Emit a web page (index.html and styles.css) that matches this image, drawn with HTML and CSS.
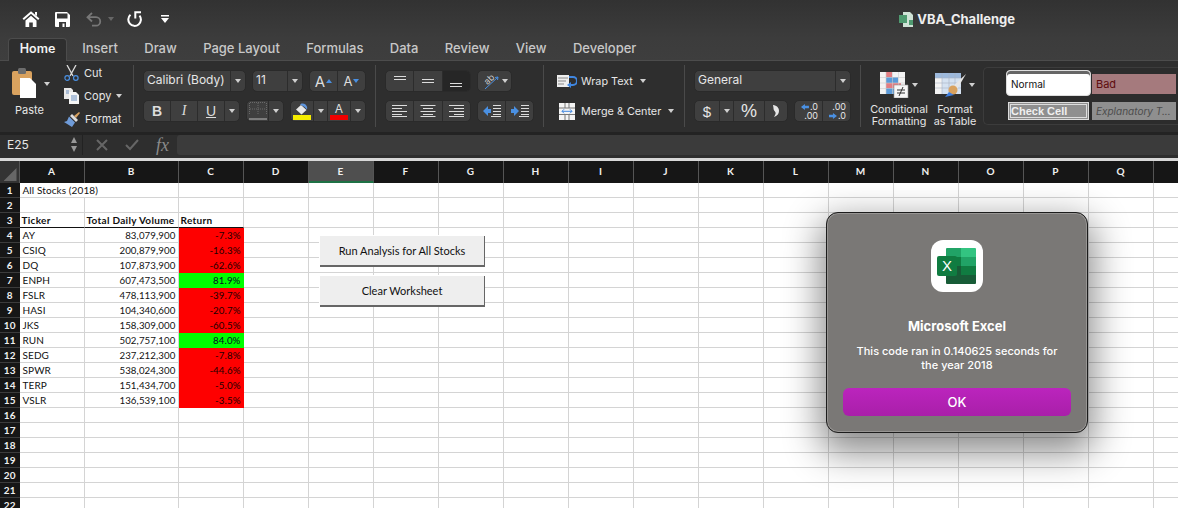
FILE: index.html
```html
<!DOCTYPE html>
<html lang="en">
<head>
    <meta charset="UTF-8">
    <title>VBA_Challenge</title>
    <link rel="stylesheet" href="styles.css">
</head>
<body>
    <div class="titlebar">
        <div class="quick">
            <svg class="qa-home" width="18" height="16" viewBox="0 0 18 16"><path d="M1.200 8.200 9 1.500l7.800 6.700" fill="none" stroke="#fff" stroke-width="2"/><path d="M13 1h2v4l-2-1.500zM3.500 9.500 9 4.800l5.500 4.700V16h-3.700v-4.500H7.200V16H3.500z" fill="#fff"/></svg>
            <svg class="qa-save" width="15" height="15" viewBox="0 0 15 15"><path d="M1 0h11l3 3v11a1 1 0 0 1-1 1H1a1 1 0 0 1-1-1V1a1 1 0 0 1 1-1z" fill="#fff"/><path d="M2 1.500h10.500v5H2zM4 10h7v5H4z" fill="#383838"/><path d="M7.500 11.500h2V15h-2z" fill="#fff"/></svg>
            <svg class="qa-undo" width="16" height="15" viewBox="0 0 16 15"><path d="M6 1 1.500 5.200 6 9.500M2 5.200h8a4.200 4.200 0 0 1 0 8.500H6" fill="none" stroke="#777" stroke-width="1.800"/></svg>
            <span class="caret qa-caret"></span>
            <svg class="qa-redo" width="16" height="16" viewBox="0 0 16 16"><path d="M4.500 3.800a6.300 6.300 0 1 0 9 .8" fill="none" stroke="#fff" stroke-width="2"/><path d="M15 1.200H9.300v6.300" fill="none" stroke="#fff" stroke-width="2"/></svg>
            <svg class="qa-more" width="8" height="8" viewBox="0 0 8 8"><path d="M0 0h8v1.500H0zM0 3h8L4 8z" fill="#fff"/></svg>
        </div>
        <div class="doc-title">
            <svg width="15" height="15" viewBox="0 0 15 15"><path d="M4 0h7l3 3v12H4z" fill="#cfe3d6"/><path d="M0 3h8v8H0z" fill="#4f9a70"/><path d="M10 8h4v5h-4z" fill="#4f9a70"/></svg>
            <span>VBA_Challenge</span>
        </div>
    </div>

    <div class="tabs">
        <div class="tab active">Home</div>
        <div class="tab">Insert</div>
        <div class="tab">Draw</div>
        <div class="tab">Page Layout</div>
        <div class="tab">Formulas</div>
        <div class="tab">Data</div>
        <div class="tab">Review</div>
        <div class="tab">View</div>
        <div class="tab">Developer</div>
    </div>

    <div class="ribbon">
        <div class="group clipboard">
            <div class="paste">
                <svg width="24" height="30" viewBox="0 0 24 30"><rect x="0" y="3" width="20" height="24" rx="2" fill="#d9a25f"/><rect x="6" y="0" width="8" height="6" rx="1.500" fill="#6d6d6d"/><path d="M8 10h10l6 6v14H8z" fill="#fff"/></svg>
                <span class="caret paste-caret"></span>
                <span class="paste-label">Paste</span>
            </div>
            <div class="clip-items">
                <div class="clip-item">
                    <svg width="15" height="16" viewBox="0 0 15 16"><path d="M3 0l6 11M12 0 6 11" stroke="#ddd" stroke-width="1.300" fill="none"/><circle cx="3.200" cy="13" r="2.300" fill="none" stroke="#4a90e2" stroke-width="1.200"/><circle cx="11.800" cy="13" r="2.300" fill="none" stroke="#4a90e2" stroke-width="1.200"/></svg>
                    <span>Cut</span>
                </div>
                <div class="clip-item">
                    <svg width="15" height="16" viewBox="0 0 15 16"><path d="M0 0h7l2 2v9H0z" fill="#e8e8e8"/><path d="M5 4h7l3 3v9H5z" fill="#f5f5f5"/><path d="M7 8h6M7 10h6M7 12h6M2 3h3M2 5h3" stroke="#6b8fc0"/></svg>
                    <span>Copy</span><span class="caret copy-caret"></span>
                </div>
                <div class="clip-item">
                    <svg width="16" height="15" viewBox="0 0 16 15"><path d="M10 4l5-4 1 1-4 5z" fill="#d9a25f"/><path d="M8 2l6 6-2 2-6-6z" fill="#ddd"/><path d="M5 4.500l6 6-3 4.500-8-5 3-1z" fill="#6f9bd8"/></svg>
                    <span>Format</span>
                </div>
            </div>
        </div>
        <div class="vsep"></div>

        <div class="group font-group">
            <div class="row">
                <div class="seg w-font"><span class="cell grow text-val">Calibri (Body)</span><span class="cell drop"><i class="caret"></i></span></div>
                <div class="seg w-size"><span class="cell grow text-val">11</span><span class="cell drop"><i class="caret"></i></span></div>
                <div class="seg w-grow">
                    <span class="cell grow letter big">A<i class="tri up"></i></span>
                    <span class="cell grow letter small">A<i class="tri down"></i></span>
                </div>
            </div>
            <div class="row">
                <div class="seg w-biu">
                    <span class="cell grow fmt bold">B</span>
                    <span class="cell grow fmt ital">I</span>
                    <span class="cell grow fmt under">U</span>
                    <span class="cell drop"><i class="caret"></i></span>
                </div>
                <div class="seg w-border">
                    <span class="cell grow"><svg width="18" height="18" viewBox="0 0 18 18"><path d="M.5 1v12M9 1v12M17.500 1v12M1 .5h16M1 7h16" stroke="#6a6a6a" stroke-dasharray="1 1" fill="none"/><path d="M0 17h18" stroke="#bbb"/></svg></span>
                    <span class="cell drop"><i class="caret"></i></span>
                </div>
                <div class="seg w-fill">
                    <span class="cell grow color">
                        <svg width="14" height="12" viewBox="0 0 14 12"><path d="M1 6.500 6 2l5.500 5-5 4.500z" fill="#e8e8e8"/><path d="M5 1.500C6 0 9 0 10.500 1.500c1.500 1.500 2 3 1.500 5L9.500 4z" fill="#5f95dd"/></svg>
                        <b class="swatch yellow"></b>
                    </span>
                    <span class="cell drop"><i class="caret"></i></span>
                    <span class="cell grow color">
                        <em class="font-a">A</em>
                        <b class="swatch red"></b>
                    </span>
                    <span class="cell drop"><i class="caret"></i></span>
                </div>
            </div>
        </div>
        <div class="vsep"></div>

        <div class="group align-group">
            <div class="row">
                <div class="seg w-align">
                    <span class="cell grow"><svg width="14" height="14" viewBox="0 0 14 14"><path d="M1 2.500h12M1 5.500h12" stroke="#ddd"/></svg></span>
                    <span class="cell grow"><svg width="14" height="14" viewBox="0 0 14 14"><path d="M1 5.500h12M1 8.500h12" stroke="#ddd"/></svg></span>
                    <span class="cell grow on"><svg width="14" height="14" viewBox="0 0 14 14"><path d="M1 9.500h12M1 12.500h12" stroke="#ddd"/></svg></span>
                </div>
                <div class="seg w-orient">
                    <span class="cell grow"><svg class="orient" width="18" height="18" viewBox="0 0 18 18"><text x="3" y="11" class="orient-text" transform="rotate(-45 7 9)">ab</text><path d="M3 17 16 5M16 5l-3 .5M16 5l-.5 3" stroke="#4a90e2" fill="none"/></svg><i class="caret"></i></span>
                </div>
            </div>
            <div class="row">
                <div class="seg w-align">
                    <span class="cell grow"><svg width="16" height="12" viewBox="0 0 16 12"><path d="M0 .5h15M0 3.500h10M0 6.500h15M0 9.500h10M0 11.500h15" stroke="#ddd"/></svg></span>
                    <span class="cell grow"><svg width="16" height="12" viewBox="0 0 16 12"><path d="M.5 .5h15M3 3.500h10M.5 6.500h15M3 9.500h10M.5 11.500h15" stroke="#ddd"/></svg></span>
                    <span class="cell grow"><svg width="16" height="12" viewBox="0 0 16 12"><path d="M1 .5h15M6 3.500h10M1 6.500h15M6 9.500h10M1 11.500h15" stroke="#ddd"/></svg></span>
                </div>
                <div class="seg w-indent">
                    <span class="cell grow"><svg width="18" height="12" viewBox="0 0 18 12"><path d="M0 6l5-5v3h3v4H5v3z" fill="#4a90e2"/><path d="M10 .5h8M10 3.500h8M10 6.500h8M10 9.500h8M8 11.500h10" stroke="#ddd"/></svg></span>
                    <span class="cell grow"><svg width="18" height="12" viewBox="0 0 18 12"><path d="M8 6 3 1v3H0v4h3v3z" fill="#4a90e2"/><path d="M10 .5h8M10 3.500h8M10 6.500h8M10 9.500h8M8 11.500h10" stroke="#ddd"/></svg></span>
                </div>
            </div>
        </div>
        <div class="vsep"></div>

        <div class="group wrap-group">
            <div class="wrap-item">
                <svg width="20" height="14" viewBox="0 0 20 14"><path d="M0 1h12v12H0z" fill="#eee"/><path d="M1 4h10M1 7h8M1 10h6" stroke="#888"/><path d="M12 3h4a3 3 0 0 1 0 8h-3" fill="none" stroke="#3f86e0" stroke-width="2"/><path d="M14 8l-4 3 4 3z" fill="#3f86e0"/></svg>
                <span>Wrap Text</span><span class="caret"></span>
            </div>
            <div class="wrap-item">
                <svg width="20" height="17" viewBox="0 0 20 17"><path d="M2 0h16v17H2z" fill="#f4f4f4"/><path d="M2 5h16M2 11.500h16M8 0v5M12 0v5M8 11.500V17M12 11.500V17" stroke="#777"/><path d="M5 8.300h10M5 8.300l2-2M5 8.300l2 2M15 8.300l-2-2M15 8.300l-2 2" stroke="#3f86e0" fill="none"/></svg>
                <span>Merge &amp; Center</span><span class="caret"></span>
            </div>
        </div>
        <div class="vsep"></div>

        <div class="group number-group">
            <div class="row">
                <div class="seg w-general"><span class="cell grow text-val">General</span><span class="cell drop"><i class="caret"></i></span></div>
            </div>
            <div class="row">
                <div class="seg w-money">
                    <span class="cell dollar">$</span>
                    <span class="cell drop"><i class="caret"></i></span>
                    <span class="cell percent">%</span>
                    <span class="cell comma"><svg width="6" height="12" viewBox="0 0 6 12"><path d="M0 0c4 .5 6 3 6 6 0 3-2 5-5 6 1-2 2-3 1.500-4.500C2 6 .5 5.500.5 3.500.5 2 0 1 0 0z" fill="#e6e6e6"/></svg></span>
                </div>
                <div class="seg w-decimal">
                    <span class="cell grow dec">
                        <span><i class="arrow left"></i>.0</span>
                        <span>.00</span>
                    </span>
                    <span class="cell grow dec">
                        <span>.00</span>
                        <span><i class="arrow right"></i>.0</span>
                    </span>
                </div>
            </div>
        </div>
        <div class="vsep"></div>

        <div class="group table-group">
            <div class="big-btn">
                <div class="big-icon">
                    <svg width="30" height="26" viewBox="0 0 30 26"><path d="M0 0h25v22H0z" fill="#f3f3f3"/><path d="M6 0h6v5H6z" fill="#e27d82"/><path d="M6 5h12v6H6z" fill="#5b9ad8"/><path d="M6 11h15v5H6z" fill="#e27d82"/><path d="M6 16h8v6H6z" fill="#5b9ad8"/><path d="M0 5.500h25M0 11h25M0 16.500h25M6 0v22M12.500 0v22M18.500 0v22" stroke="#ccc" stroke-width=".6"/><path d="M14 13h14v13H14z" fill="#f6f6f6" stroke="#999" stroke-width=".6"/><path d="M17 18h8M17 21h8M23 15l-4 9" stroke="#333" fill="none"/></svg>
                    <span class="caret"></span>
                </div>
                <span class="big-label">Conditional<br>Formatting</span>
            </div>
            <div class="big-btn">
                <div class="big-icon">
                    <svg width="32" height="26" viewBox="0 0 32 26"><path d="M0 1h26v21H0z" fill="#f3f3f3"/><path d="M0 1h26v5H0z" fill="#9db9dc"/><path d="M7 6h19v16H7z" fill="#d5e2f1"/><path d="M0 6h26M0 11h26M0 16h26M7 1v21M14 1v21M20 1v21" stroke="#a8b4c2" stroke-width=".6"/><path d="M31 2 17 15l4 4z" fill="#e6e6e6"/><circle cx="18" cy="18" r="4.500" fill="#d9a25f"/><path d="M14 20l5 3-9 2z" fill="#3f7fe0"/></svg>
                    <span class="caret"></span>
                </div>
                <span class="big-label">Format<br>as Table</span>
            </div>
        </div>

        <div class="styles-panel">
            <div class="style normal">Normal</div>
            <div class="style bad">Bad</div>
            <div class="style check">Check Cell</div>
            <div class="style explain">Explanatory T...</div>
        </div>
    </div>

    <div class="formula-bar">
        <div class="name-box">
            <span>E25</span>
            <span class="stepper"><i class="step up"></i><i class="step down"></i></span>
        </div>
        <div class="formula-btns">
            <svg width="12" height="12" viewBox="0 0 12 12"><path d="M1 1l10 10M11 1 1 11" stroke="#666" stroke-width="2"/></svg>
            <svg width="14" height="12" viewBox="0 0 14 12"><path d="M1 6l4 4 8-9" stroke="#666" stroke-width="2" fill="none"/></svg>
            <span class="fx">fx</span>
        </div>
        <div class="formula-input"></div>
    </div>

    <div class="sheet">
        <table class="grid">
            <colgroup>
                <col class="c-head"><col class="c-a"><col class="c-b">
                <col class="c-n"><col class="c-n"><col class="c-n"><col class="c-n"><col class="c-n"><col class="c-n"><col class="c-n"><col class="c-n"><col class="c-n"><col class="c-n"><col class="c-n"><col class="c-n"><col class="c-n"><col class="c-n"><col class="c-n"><col class="c-r">
            </colgroup>
            <thead>
                <tr><th class="corner"><i></i></th><th>A</th><th>B</th><th>C</th><th>D</th><th class="sel">E</th><th>F</th><th>G</th><th>H</th><th>I</th><th>J</th><th>K</th><th>L</th><th>M</th><th>N</th><th>O</th><th>P</th><th>Q</th><th></th></tr>
            </thead>
            <tbody>
                <tr><th>1</th><td colspan="2">All Stocks (2018)</td><td></td><td></td><td></td><td></td><td></td><td></td><td></td><td></td><td></td><td></td><td></td><td></td><td></td><td></td><td></td><td></td></tr>
                <tr><th>2</th><td></td><td></td><td></td><td></td><td></td><td></td><td></td><td></td><td></td><td></td><td></td><td></td><td></td><td></td><td></td><td></td><td></td><td></td></tr>
                <tr class="heads"><th>3</th><td class="hd">Ticker</td><td class="hd">Total Daily Volume</td><td class="hd">Return</td><td></td><td></td><td></td><td></td><td></td><td></td><td></td><td></td><td></td><td></td><td></td><td></td><td></td><td></td><td></td></tr>
                <tr><th>4</th><td>AY</td><td class="num">83,079,900</td><td class="num neg">-7.3%</td><td></td><td></td><td></td><td></td><td></td><td></td><td></td><td></td><td></td><td></td><td></td><td></td><td></td><td></td><td></td></tr>
                <tr><th>5</th><td>CSIQ</td><td class="num">200,879,900</td><td class="num neg">-16.3%</td><td></td><td></td><td></td><td></td><td></td><td></td><td></td><td></td><td></td><td></td><td></td><td></td><td></td><td></td><td></td></tr>
                <tr><th>6</th><td>DQ</td><td class="num">107,873,900</td><td class="num neg">-62.6%</td><td></td><td></td><td></td><td></td><td></td><td></td><td></td><td></td><td></td><td></td><td></td><td></td><td></td><td></td><td></td></tr>
                <tr><th>7</th><td>ENPH</td><td class="num">607,473,500</td><td class="num pos">81.9%</td><td></td><td></td><td></td><td></td><td></td><td></td><td></td><td></td><td></td><td></td><td></td><td></td><td></td><td></td><td></td></tr>
                <tr><th>8</th><td>FSLR</td><td class="num">478,113,900</td><td class="num neg">-39.7%</td><td></td><td></td><td></td><td></td><td></td><td></td><td></td><td></td><td></td><td></td><td></td><td></td><td></td><td></td><td></td></tr>
                <tr><th>9</th><td>HASI</td><td class="num">104,340,600</td><td class="num neg">-20.7%</td><td></td><td></td><td></td><td></td><td></td><td></td><td></td><td></td><td></td><td></td><td></td><td></td><td></td><td></td><td></td></tr>
                <tr><th>10</th><td>JKS</td><td class="num">158,309,000</td><td class="num neg">-60.5%</td><td></td><td></td><td></td><td></td><td></td><td></td><td></td><td></td><td></td><td></td><td></td><td></td><td></td><td></td><td></td></tr>
                <tr><th>11</th><td>RUN</td><td class="num">502,757,100</td><td class="num pos">84.0%</td><td></td><td></td><td></td><td></td><td></td><td></td><td></td><td></td><td></td><td></td><td></td><td></td><td></td><td></td><td></td></tr>
                <tr><th>12</th><td>SEDG</td><td class="num">237,212,300</td><td class="num neg">-7.8%</td><td></td><td></td><td></td><td></td><td></td><td></td><td></td><td></td><td></td><td></td><td></td><td></td><td></td><td></td><td></td></tr>
                <tr><th>13</th><td>SPWR</td><td class="num">538,024,300</td><td class="num neg">-44.6%</td><td></td><td></td><td></td><td></td><td></td><td></td><td></td><td></td><td></td><td></td><td></td><td></td><td></td><td></td><td></td></tr>
                <tr><th>14</th><td>TERP</td><td class="num">151,434,700</td><td class="num neg">-5.0%</td><td></td><td></td><td></td><td></td><td></td><td></td><td></td><td></td><td></td><td></td><td></td><td></td><td></td><td></td><td></td></tr>
                <tr><th>15</th><td>VSLR</td><td class="num">136,539,100</td><td class="num neg">-3.5%</td><td></td><td></td><td></td><td></td><td></td><td></td><td></td><td></td><td></td><td></td><td></td><td></td><td></td><td></td><td></td></tr>
                <tr><th>16</th><td></td><td></td><td></td><td></td><td></td><td></td><td></td><td></td><td></td><td></td><td></td><td></td><td></td><td></td><td></td><td></td><td></td><td></td></tr>
                <tr><th>17</th><td></td><td></td><td></td><td></td><td></td><td></td><td></td><td></td><td></td><td></td><td></td><td></td><td></td><td></td><td></td><td></td><td></td><td></td></tr>
                <tr><th>18</th><td></td><td></td><td></td><td></td><td></td><td></td><td></td><td></td><td></td><td></td><td></td><td></td><td></td><td></td><td></td><td></td><td></td><td></td></tr>
                <tr><th>19</th><td></td><td></td><td></td><td></td><td></td><td></td><td></td><td></td><td></td><td></td><td></td><td></td><td></td><td></td><td></td><td></td><td></td><td></td></tr>
                <tr><th>20</th><td></td><td></td><td></td><td></td><td></td><td></td><td></td><td></td><td></td><td></td><td></td><td></td><td></td><td></td><td></td><td></td><td></td><td></td></tr>
                <tr><th>21</th><td></td><td></td><td></td><td></td><td></td><td></td><td></td><td></td><td></td><td></td><td></td><td></td><td></td><td></td><td></td><td></td><td></td><td></td></tr>
                <tr><th>22</th><td></td><td></td><td></td><td></td><td></td><td></td><td></td><td></td><td></td><td></td><td></td><td></td><td></td><td></td><td></td><td></td><td></td><td></td></tr>
            </tbody>
        </table>

        <button class="macro-btn run">Run Analysis for All Stocks</button>
        <button class="macro-btn clear">Clear Worksheet</button>

        <div class="dialog">
            <div class="app-icon">
                <svg width="40" height="36" viewBox="0 0 40 36">
                    <path d="M9 1a1 1 0 0 1 1-1h14v9H9z" fill="#21a366"/>
                    <path d="M24 0h14a1 1 0 0 1 1 1v8H24z" fill="#33c481"/>
                    <path d="M9 9h15v9H9z" fill="#107c41"/>
                    <path d="M24 9h15v9H24z" fill="#21a366"/>
                    <path d="M9 18h15v9H9z" fill="#185c37"/>
                    <path d="M24 18h15v9H24z" fill="#107c41"/>
                    <path d="M9 27h30v8a1 1 0 0 1-1 1H10a1 1 0 0 1-1-1z" fill="#185c37"/>
                    <rect x="0" y="8" width="20" height="20" rx="2" fill="#107c41"/>
                    <text x="10" y="23" class="icon-x">X</text>
                </svg>
            </div>
            <div class="dlg-title">Microsoft Excel</div>
            <div class="dlg-msg">This code ran in 0.140625 seconds for<br>the year 2018</div>
            <button class="dlg-ok">OK</button>
        </div>
    </div>
</body>
</html>
```

FILE: styles.css
```css
* {
    box-sizing: border-box;
}

body {
    margin: 0;
    height: 508px;
    overflow: hidden;
    background: #fff;
    font-family: Inter, "Noto Sans", sans-serif;
    font-size: 11px;
    color: #e6e6e6;
}

.caret {
    display: inline-block;
    width: 0;
    height: 0;
    border-left: 3px solid transparent;
    border-right: 3px solid transparent;
    border-top: 4px solid #d0d0d0;
}

/* title bar */
.titlebar {
    height: 38px;
    display: flex;
    align-items: center;
    background: linear-gradient(#323232, #3c3c3c);
}
.quick {
    display: flex;
    align-items: center;
    padding-left: 22px;
}
.qa-save { margin-left: 15px; }
.qa-undo { margin-left: 16px; }
.qa-caret { margin-left: 6px; border-top-color: #666; }
.qa-redo { margin-left: 12px; }
.qa-more { margin-left: 19px; }
.doc-title {
    margin-left: auto;
    margin-right: 163px;
    display: flex;
    align-items: center;
    gap: 3px;
    font-size: 13px;
    font-weight: 700;
    color: #eee;
}

/* tabs */
.tabs {
    height: 23px;
    display: flex;
    gap: 2px;
    padding-left: 8px;
    background: linear-gradient(#3c3c3c, #3e3e3e);
    border-bottom: 1px solid #4c4c4c;
    font-size: 13px;
    font-weight: 500;
    color: #c8c8c8;
}
.tab {
    padding: 0 12.200px;
    line-height: 20px;
}
.tab.active {
    width: 59px;
    height: 23px;
    margin-right: 1px;
    background: #2e2e2e;
    border: 1px solid #4c4c4c;
    border-bottom: 0;
    border-radius: 4px 4px 0 0;
    padding: 0;
    text-align: center;
    font-size: 12.500px;
    font-weight: 600;
    color: #f2f2f2;
}

/* ribbon */
.ribbon {
    height: 71px;
    display: flex;
    background: #2e2e2e;
    overflow: hidden;
}
.vsep {
    flex: none;
    width: 1px;
    margin: 4px 0 5px;
    background: #4a4a4a;
}
.group {
    flex: none;
    display: flex;
    flex-direction: column;
    gap: 8px;
    padding: 9px 9px 0;
}
.row {
    display: flex;
    gap: 6px;
    height: 22px;
}
.seg {
    display: flex;
    align-items: stretch;
    height: 22px;
    background: #3f3f3f;
    border: 1px solid #2a2a2a;
    border-radius: 5px;
    overflow: hidden;
}
.cell {
    display: flex;
    align-items: center;
    justify-content: center;
    border-right: 1px solid #2c2c2c;
}
.cell:last-child {
    border-right: 0;
}
.cell.grow {
    flex: 1;
}
.cell.on {
    background: #262626;
}
.cell.drop {
    flex: none;
    width: 14px;
}
.text-val {
    justify-content: flex-start;
    padding: 0 0 3px 3px;
    font-size: 12px;
}
.w-font { width: 103px; }
.w-size { width: 51px; }
.w-grow { width: 57px; }
.w-biu { width: 97px; }
.w-border { width: 38px; }
.w-fill { width: 76px; }
.w-align { width: 86px; }
.w-orient { width: 35px; }
.w-indent { width: 57px; }
.w-general { width: 157px; }
.w-money { width: 94px; }
.w-decimal { width: 57px; }

/* clipboard */
.clipboard {
    width: 133px;
    flex-direction: row;
    padding: 0;
    gap: 0;
}
.paste {
    position: relative;
    width: 64px;
    padding: 7px 0 0 12px;
}
.paste-caret {
    position: absolute;
    left: 44px;
    top: 21px;
}
.paste-label {
    display: block;
    margin-top: 2px;
    margin-left: 3px;
}
.clip-items {
    display: flex;
    flex-direction: column;
    padding-top: 4px;
    gap: 7px;
}
.clip-item {
    display: flex;
    align-items: center;
    gap: 5px;
    height: 16px;
}

/* font group */
.font-group .letter {
    gap: 1px;
    align-items: center;
    color: #ddd;
}
.letter.big { font-size: 15px; }
.letter.small { font-size: 13px; }
.tri {
    border-left: 3px solid transparent;
    border-right: 3px solid transparent;
}
.tri.up { border-bottom: 4px solid #4a90e2; }
.tri.down { border-top: 4px solid #4a90e2; }
.fmt {
    font-size: 14px;
    color: #ddd;
    font-family: "Liberation Sans", sans-serif;
}
.fmt.bold { font-weight: 700; }
.fmt.ital { font-style: italic; font-family: "Liberation Serif", serif; }
.fmt.under { text-decoration: underline; }
.color {
    flex-direction: column;
    gap: 0;
    padding-top: 1px;
}
.swatch {
    display: block;
    width: 18px;
    height: 5px;
}
.swatch.yellow { background: #f5ec00; }
.swatch.red { background: #f00000; }
.font-a {
    font-style: normal;
    font-size: 12px;
    line-height: 12px;
    color: #ddd;
}
.orient {
    overflow: visible;
}
.orient-text {
    font-size: 9px;
    fill: #ccc;
}
.w-orient .cell {
    gap: 2px;
}

/* wrap and merge */
.wrap-group {
    width: 140px;
    padding: 11px 0 0 13px;
    gap: 12px;
    font-size: 10.800px;
}
.wrap-item {
    display: flex;
    align-items: center;
    gap: 4px;
    height: 18px;
}
.wrap-item .caret {
    margin-left: 3px;
}

/* number */
.dollar {
    width: 25px;
    font-size: 15px;
    font-family: "Liberation Sans", sans-serif;
}
.percent {
    width: 31px;
    font-size: 18px;
    font-family: "Liberation Sans", sans-serif;
}
.comma {
    flex: 1;
}
.dec {
    flex-direction: column;
    font-size: 9px;
    line-height: 9px;
    align-items: flex-end;
    padding-right: 4px;
}
.arrow {
    display: inline-block;
    width: 8px;
    height: 6px;
    margin-right: 1px;
    background: #4a90e2;
}
.arrow.left { clip-path: polygon(0 50%, 50% 0, 50% 30%, 100% 30%, 100% 70%, 50% 70%, 50% 100%); }
.arrow.right { clip-path: polygon(100% 50%, 50% 0, 50% 30%, 0 30%, 0 70%, 50% 70%, 50% 100%); }

/* conditional formatting, format as table */
.table-group {
    width: 122px;
    flex-direction: row;
    gap: 0;
    padding: 10px 0 0 10px;
}
.big-btn {
    width: 56px;
    display: flex;
    flex-direction: column;
    align-items: center;
}
.big-icon {
    display: flex;
    align-items: center;
    gap: 2px;
    height: 27px;
}
.big-label {
    margin-top: 6px;
    text-align: center;
    font-size: 10.800px;
    line-height: 12px;
    white-space: nowrap;
}

/* cell styles */
.styles-panel {
    flex: none;
    width: 200px;
    height: 58px;
    margin-top: 6px;
    padding: 2px 0 0 22px;
    display: grid;
    grid-template-columns: 85px 85px;
    grid-template-rows: 26px 18px;
    row-gap: 6px;
    background: #2c2c2c;
    border: 1px solid #3c3c3c;
    border-right: 0;
    border-radius: 5px 0 0 5px;
    font-size: 10px;
}
.style {
    display: flex;
    align-items: center;
    padding-left: 4px;
}
.style.normal {
    padding-top: 2px;
    background: #fff;
    color: #111;
    border: 1px solid #ddd;
    border-radius: 4px;
    box-shadow: inset 0 3px 0 #666;
}
.style.bad {
    margin: 4px 0 2px 1px;
    background: #a57a7d;
    color: #5e0c0e;
    font-size: 11px;
}
.style.check {
    margin: 0 2px;
    padding-left: 0;
    background: #8f8f8f;
    border: 3px double #ddd;
    color: #f0f0f0;
    font-size: 11px;
    font-weight: 700;
    font-family: "Liberation Sans", sans-serif;
}
.style.explain {
    margin-left: 1px;
    background: #8f8f8f;
    color: #4c4c4c;
    font-style: italic;
}

/* formula bar */
.formula-bar {
    height: 23px;
    display: flex;
    align-items: stretch;
    background: #2e2e2e;
    border-top: 3px solid #232323;
}
.name-box {
    width: 83px;
    padding: 0 5px 2px 7px;
    display: flex;
    align-items: center;
    justify-content: space-between;
    border-right: 1px solid #222;
    font-size: 12px;
}
.stepper {
    display: flex;
    flex-direction: column;
    gap: 3px;
}
.step {
    border-left: 3.500px solid transparent;
    border-right: 3.500px solid transparent;
}
.step.up { border-bottom: 6px solid #999; }
.step.down { border-top: 6px solid #999; }
.formula-btns {
    width: 94px;
    display: flex;
    align-items: center;
    padding-left: 13px;
    gap: 17px;
}
.fx {
    font-family: "Liberation Serif", serif;
    font-style: italic;
    font-size: 18px;
    color: #8a8a8a;
}
.formula-input {
    flex: 1;
    background: #3b3b3b;
    border-radius: 3px 0 0 3px;
}

/* sheet */
.sheet {
    position: relative;
    height: 353px;
    border-top: 3px solid #2e2e2e;
    box-shadow: inset 0 3px 0 #d8d8d8;
}
.grid {
    table-layout: fixed;
    width: 1178px;
    margin-top: 3px;
    border-collapse: separate;
    border-spacing: 0;
    font-family: Lato, sans-serif;
    font-size: 10px;
    letter-spacing: .1px;
    color: #111;
}
.c-head { width: 19.500px; }
.c-a { width: 65px; }
.c-b { width: 94px; }
.c-n { width: 65px; }
.c-r { width: 25px; }
.grid thead th {
    height: 22px;
    background: #161616;
    color: #f0f0f0;
    font-weight: 700;
    font-size: 10px;
    border-right: 1px solid #555;
    padding: 0 0 2px;
}
.grid thead th.sel {
    background: #4f4f4f;
    border-bottom: 2px solid #1e7145;
    padding: 0;
}
.corner {
    position: relative;
    background: #333 !important;
}
.corner i {
    position: absolute;
    right: 2px;
    bottom: 2px;
    width: 13px;
    height: 13px;
    background: #666;
    clip-path: polygon(100% 0, 100% 100%, 0 100%);
}
.grid tbody th {
    height: 15px;
    padding: 0;
    background: #161616;
    color: #f0f0f0;
    font-weight: 700;
    font-size: 10px;
    border-bottom: 1px solid #3c3c3c;
}
.grid td {
    height: 15px;
    padding: 0 2px 0 3px;
    border-right: 1px solid #d4d4d4;
    border-bottom: 1px solid #d4d4d4;
    line-height: 13px;
    white-space: nowrap;
    overflow: hidden;
}
.grid td.hd {
    padding-left: 2px;
    font-weight: 700;
    letter-spacing: .3px;
    border-bottom: 1px solid #111;
}
.grid td.num {
    font-size: 9.700px;
    text-align: right;
}
.grid td.neg {
    background: #fe0000;
    border-color: #fe0000;
    color: #1a0000;
}
.grid td.pos {
    background: #00fe00;
    border-color: #00fe00;
    color: #012;
}

/* macro buttons sit over the grid */
.macro-btn {
    position: absolute;
    left: 320px;
    width: 165px;
    height: 31px;
    background: #eee;
    border: 0;
    border-right: 1px solid #666;
    border-bottom: 2px solid #666;
    box-shadow: -1px -1px 0 #fff;
    font-family: Lato, sans-serif;
    font-size: 11px;
    color: #111;
}
.macro-btn.run { top: 78px; }
.macro-btn.clear { top: 118px; }

/* dialog */
.dialog {
    position: absolute;
    left: 826px;
    top: 54px;
    width: 262px;
    height: 221px;
    display: flex;
    flex-direction: column;
    align-items: center;
    padding-top: 27px;
    background: #7a7876;
    border: 1px solid #1c1c1c;
    border-radius: 12px;
    box-shadow: inset 0 0 0 1px #979593, 0 14px 36px 6px rgba(0, 0, 0, .45);
    color: #fff;
}
.app-icon {
    width: 52px;
    height: 52px;
    display: flex;
    align-items: center;
    justify-content: center;
    background: #fff;
    border-radius: 12px;
}
.icon-x {
    font-family: "Liberation Sans", sans-serif;
    font-size: 15px;
    fill: #fff;
    text-anchor: middle;
}
.dlg-title {
    margin-top: 26px;
    font-size: 13px;
    font-weight: 700;
    line-height: 16px;
}
.dlg-msg {
    margin-top: 10px;
    text-align: center;
    font-size: 11px;
    font-weight: 500;
    line-height: 14px;
}
.dlg-ok {
    width: 228px;
    height: 28px;
    margin-top: 16px;
    background: linear-gradient(#bb24bd, #a91fa9);
    border: 0;
    border-radius: 6px;
    font-family: Inter, sans-serif;
    font-size: 13px;
    font-weight: 500;
    color: #fff;
}
```
